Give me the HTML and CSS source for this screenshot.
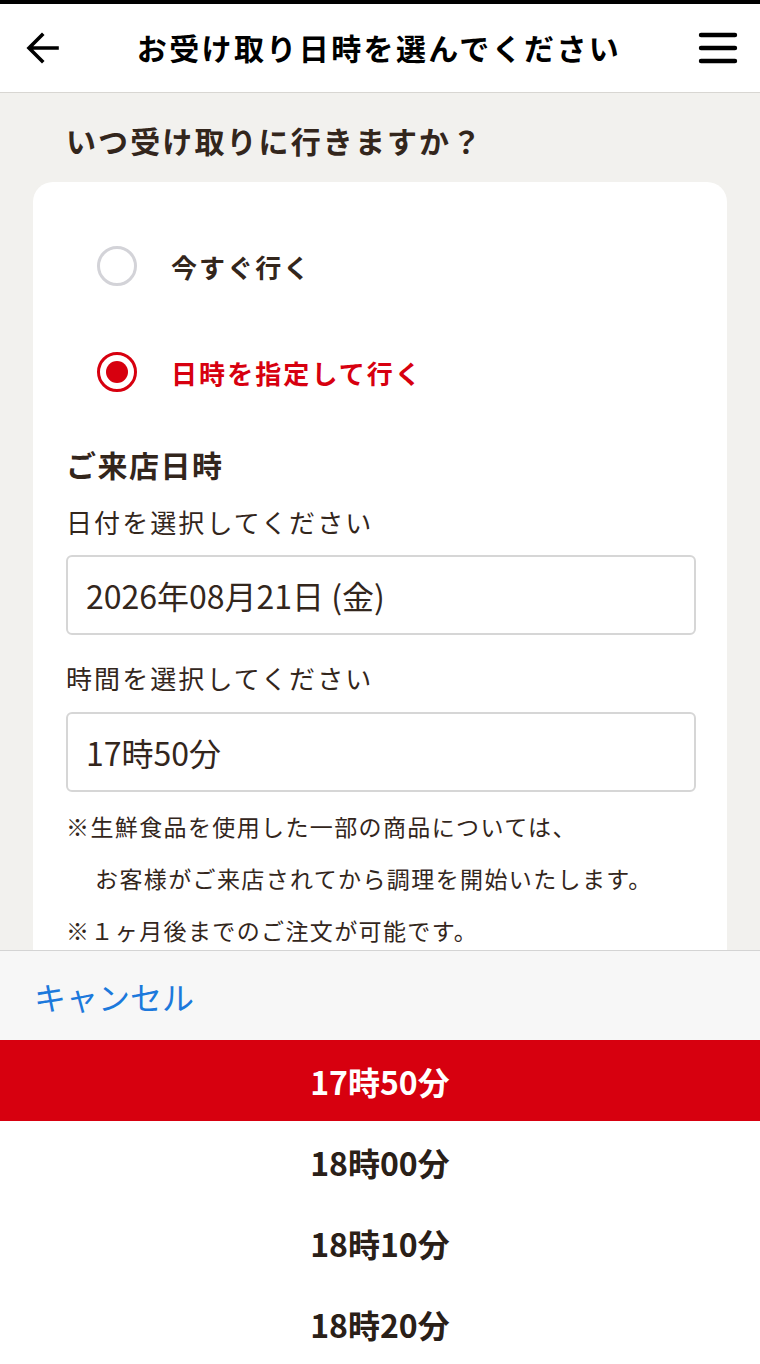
FILE: index.html
```html
<!DOCTYPE html>
<html lang="ja">
<head>
    <meta charset="UTF-8">
    <meta name="viewport" content="width=device-width, initial-scale=1.0">
    <title>お受け取り日時を選んでください</title>
    <link rel="stylesheet" href="styles.css">
</head>
<body>
    <header class="header">
        <button class="icon-btn" aria-label="戻る">
            <svg width="36" height="36" viewBox="0 0 36 36">
                <path d="M33 18H6M18 5L5 18l13 13" fill="none" stroke="#000" stroke-width="3.6" stroke-linecap="square"/>
            </svg>
        </button>
        <h1 class="header-title">お受け取り日時を選んでください</h1>
        <button class="icon-btn" aria-label="メニュー">
            <svg width="40" height="36" viewBox="0 0 40 36">
                <path d="M3 5h34M3 18h34M3 31h34" stroke="#000" stroke-width="4.4" stroke-linecap="round"/>
            </svg>
        </button>
    </header>

    <main class="main">
        <h2 class="question">いつ受け取りに行きますか？</h2>

        <div class="card">
            <label class="radio-row">
                <span class="radio"></span>
                <span class="radio-label">今すぐ行く</span>
            </label>
            <label class="radio-row active">
                <span class="radio"></span>
                <span class="radio-label">日時を指定して行く</span>
            </label>

            <h3 class="section-title">ご来店日時</h3>

            <p class="field-label">日付を選択してください</p>
            <div class="field">2026年08月21日 (金)</div>

            <p class="field-label">時間を選択してください</p>
            <div class="field">17時50分</div>

            <p class="note">※生鮮食品を使用した一部の商品については、</p>
            <p class="note indent">お客様がご来店されてから調理を開始いたします。</p>
            <p class="note">※１ヶ月後までのご注文が可能です。</p>
        </div>
    </main>

    <div class="picker">
        <div class="picker-bar">
            <button class="cancel">キャンセル</button>
        </div>
        <ul class="picker-list">
            <li class="selected">17時50分</li>
            <li>18時00分</li>
            <li>18時10分</li>
            <li>18時20分</li>
        </ul>
    </div>
</body>
</html>
```

FILE: styles.css
```css
body {
    margin: 0;
    font-family: "Noto Sans CJK JP", "Noto Sans", sans-serif;
    background-color: #f2f1ee;
    color: #33261c;
    height: 1364px;
    overflow: hidden;
    position: relative;
}
.header {
    display: flex;
    align-items: center;
    justify-content: space-between;
    height: 88px;
    padding: 0 22px 0 24px;
    background: #fff;
    border-top: 4px solid #000;
    border-bottom: 1px solid #d8d6d2;
}
.icon-btn {
    background: none;
    border: none;
    padding: 0;
    display: flex;
    cursor: pointer;
}
.header-title {
    margin: 0 0 2px;
    font-size: 30px;
    font-weight: 700;
    color: #000;
    letter-spacing: 0.08em;
}
.main {
    padding: 25px 33px 0;
}
.question {
    margin: 0 0 19px 33px;
    font-size: 30px;
    font-weight: 700;
    letter-spacing: 0.07em;
    line-height: 1.5;
}
.card {
    background: #fff;
    border-radius: 20px;
    padding: 60px 31px 40px 33px;
    height: 1060px;
}
.radio-row {
    display: flex;
    align-items: center;
    gap: 34px;
    padding-left: 31px;
    height: 48px;
    margin-bottom: 58px;
}
.radio {
    width: 34px;
    height: 34px;
    border: 3px solid #d3d3d8;
    border-radius: 50%;
    box-sizing: content-box;
    flex-shrink: 0;
    position: relative;
}
.radio-label {
    font-size: 26px;
    font-weight: 700;
    letter-spacing: 0.08em;
}
.radio-row.active .radio {
    border-color: #d7000f;
}
.radio-row.active .radio::after {
    content: "";
    position: absolute;
    top: 6px;
    left: 6px;
    width: 22px;
    height: 22px;
    border-radius: 50%;
    background: #d7000f;
}
.radio-row.active .radio-label {
    color: #d7000f;
}
.section-title {
    margin: -12px 0 -8px;
    font-size: 30px;
    font-weight: 700;
    letter-spacing: 0.05em;
    line-height: 1.5;
}
.field-label {
    margin: 25px 0 15px;
    font-size: 26px;
    letter-spacing: 0.08em;
    line-height: 1.4;
}
.field {
    height: 76px;
    border: 2px solid #d6d6d6;
    border-radius: 6px;
    display: flex;
    align-items: center;
    padding-left: 18px;
    font-size: 32px;
    margin-bottom: 14px;
}
.note {
    margin: 12px 0 0;
    font-size: 23px;
    letter-spacing: 0.06em;
    line-height: 40px;
}
.note.indent {
    padding-left: 29px;
}
.picker {
    position: absolute;
    left: 0;
    right: 0;
    top: 950px;
    bottom: 0;
    background: #fff;
    border-top: 1px solid #d4d4d4;
}
.picker-bar {
    height: 89px;
    background: #f7f7f7;
    display: flex;
    align-items: center;
    padding-left: 34px;
}
.cancel {
    background: none;
    border: none;
    padding: 0;
    font-family: inherit;
    font-size: 32px;
    color: #1c79dc;
    cursor: pointer;
}
.picker-list {
    list-style: none;
    margin: 0;
    padding: 0;
}
.picker-list li {
    height: 81px;
    display: flex;
    align-items: center;
    justify-content: center;
    font-size: 32px;
    font-weight: 700;
    color: #2a2018;
}
.picker-list li.selected {
    background: #d7000f;
    color: #fff;
}
```
